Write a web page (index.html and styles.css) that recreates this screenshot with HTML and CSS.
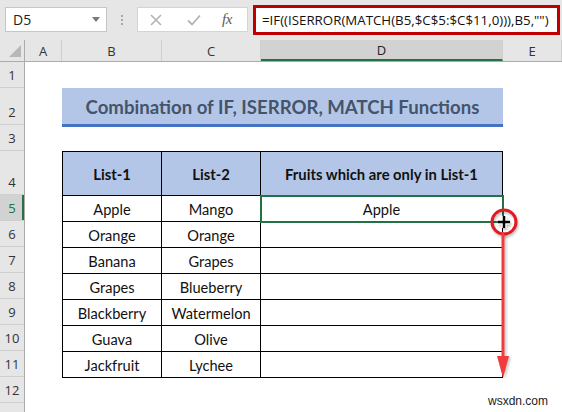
FILE: index.html
```html
<!DOCTYPE html>
<html lang="en">
<head>
<meta charset="utf-8">
<title>Combination of IF, ISERROR, MATCH Functions</title>
<link rel="stylesheet" href="styles.css">
</head>
<body>
<div class="app">
  <div class="toolbar">
    <div class="namebox">
      <span class="ref">D5</span>
      <svg class="caret" width="8" height="5" viewBox="0 0 8 5"><path d="M0 0H8L4 5Z" fill="#7a7a7a"/></svg>
    </div>
    <div class="grip"><i></i><i></i><i></i></div>
    <div class="fxbox">
      <svg class="tool" width="14" height="14" viewBox="0 0 14 14"><path d="M2 2L12 12M12 2L2 12" stroke="#b3b3b3" stroke-width="1.6" fill="none"/></svg>
      <svg class="tool" width="16" height="14" viewBox="0 0 16 14"><path d="M2 7.5L6 11.5L14 2.5" stroke="#b3b3b3" stroke-width="1.8" fill="none"/></svg>
      <span class="fx">fx</span>
    </div>
    <div class="formula">=IF((ISERROR(MATCH(B5,$C$5:$C$11,0))),B5,"")</div>
  </div>

  <div class="sheet">
    <div class="colheads">
      <div class="corner"><svg width="12" height="12" viewBox="0 0 12 12"><path d="M12 0V12H0Z" fill="#b8b8b8"/></svg></div>
      <div class="ch">A</div>
      <div class="ch">B</div>
      <div class="ch">C</div>
      <div class="ch active">D</div>
      <div class="ch">E</div>
    </div>

    <div class="body">
      <div class="rowheads">
        <div class="rh">1</div>
        <div class="rh h37">2</div>
        <div class="rh">3</div>
        <div class="rh h44">4</div>
        <div class="rh active">5</div>
        <div class="rh">6</div>
        <div class="rh">7</div>
        <div class="rh">8</div>
        <div class="rh">9</div>
        <div class="rh">10</div>
        <div class="rh">11</div>
        <div class="rh">12</div>
        <div class="rh"></div>
      </div>

      <div class="cells">
        <div class="gap"></div>
        <div class="title">Combination of IF, ISERROR, MATCH Functions</div>
        <div class="gap"></div>
        <div class="table">
          <div class="th">List-1</div>
          <div class="th">List-2</div>
          <div class="th">Fruits which are only in List-1</div>

          <div class="td">Apple</div><div class="td">Mango</div><div class="td selected">Apple</div>
          <div class="td">Orange</div><div class="td">Orange</div><div class="td"></div>
          <div class="td">Banana</div><div class="td">Grapes</div><div class="td"></div>
          <div class="td">Grapes</div><div class="td">Blueberry</div><div class="td"></div>
          <div class="td">Blackberry</div><div class="td">Watermelon</div><div class="td"></div>
          <div class="td">Guava</div><div class="td">Olive</div><div class="td"></div>
          <div class="td">Jackfruit</div><div class="td">Lychee</div><div class="td"></div>

          <!-- fill handle cursor and drag direction -->
          <svg class="handle" width="32" height="32" viewBox="0 0 32 32">
            <circle cx="16" cy="16" r="12" fill="none" stroke="#e31b23" stroke-width="3"/>
            <path d="M10 16H22M16 10V22" stroke="#fff" stroke-width="5"/>
            <path d="M10 16H22M16 10V22" stroke="#000" stroke-width="2.5"/>
          </svg>
          <svg class="drag" width="16" height="148" viewBox="0 0 16 148">
            <rect x="6.5" y="0" width="3" height="130" fill="#f03c3c"/>
            <path d="M2 124H14L8 146Z" fill="#f03c3c"/>
          </svg>
        </div>
      </div>
    </div>
  </div>

  <div class="watermark">wsxdn.com</div>
</div>
</body>
</html>
```

FILE: styles.css
```css
* { box-sizing: border-box; }

html, body {
  margin: 0;
  padding: 0;
  background: #ffffff;
}

.app {
  position: relative;
  width: 562px;
  height: 412px;
  overflow: hidden;
  font-family: "Open Sans", "Noto Sans", sans-serif;
}

/* name box + formula bar */
.toolbar {
  height: 40px;
  background: #e6e6e6;
  display: flex;
  align-items: flex-start;
  padding: 7px 2px 0 5px;
}

.namebox {
  width: 102px;
  height: 25px;
  background: #fff;
  border: 1px solid #c6c6c6;
  display: flex;
  align-items: center;
  justify-content: space-between;
  padding: 0 6px 0 7px;
  font-size: 14px;
  color: #222;
}

.namebox .ref { letter-spacing: 0.2px; }

.grip {
  width: 30px;
  height: 25px;
  display: flex;
  flex-direction: column;
  align-items: center;
  justify-content: center;
  gap: 2px;
}

.grip i {
  display: block;
  width: 2px;
  height: 2px;
  background: #a8a8a8;
}

.fxbox {
  width: 111px;
  height: 25px;
  background: #fff;
  border: 1px solid #d4d4d4;
  display: flex;
  align-items: center;
  padding: 0 0 0 11px;
  gap: 0;
}

.fxbox .tool { margin-right: 23px; }
.fxbox .tool + .tool { margin-right: 20px; }

.fx {
  font-family: "Liberation Serif", "DejaVu Serif", serif;
  font-style: italic;
  font-size: 15px;
  color: #5a5a5a;
  letter-spacing: -0.5px;
}

.formula {
  flex: 1;
  margin-left: 5px;
  margin-top: -2px;
  height: 30px;
  background: #fff;
  border: 3px solid #c00000;
  display: flex;
  align-items: center;
  padding-left: 6px;
  font-size: 13.3px;
  color: #111;
  white-space: nowrap;
  overflow: hidden;
}

/* worksheet */
.colheads {
  display: grid;
  grid-template-columns: 25px 37px 100px 99px 242px 1fr;
  height: 22px;
  background: #e6e6e6;
  border-bottom: 1px solid #ababab;
}

.corner {
  display: flex;
  align-items: flex-end;
  justify-content: flex-end;
  padding: 0 3px 4px 0;
  border-right: 1px solid #ababab;
}

.ch {
  display: flex;
  align-items: center;
  justify-content: center;
  font-size: 13px;
  color: #333;
  border-right: 1px solid #cfcfcf;
}

.ch.active {
  background: #d2d2d2;
  border-bottom: 2px solid #217346;
  color: #222;
}

.body {
  display: flex;
}

.rowheads {
  width: 25px;
  flex: none;
  background: #e6e6e6;
  border-right: 1px solid #ababab;
  display: flex;
  flex-direction: column;
}

.rh {
  height: 26px;
  border-bottom: 1px solid #cfcfcf;
  display: flex;
  align-items: flex-end;
  justify-content: center;
  padding-bottom: 3px;
  font-size: 13px;
  color: #333;
}

.rh.h37 { height: 37px; }
.rh.h44 { height: 44px; }

.rh.active {
  background: #d2d2d2;
  box-shadow: inset -2px 0 0 #217346;
  color: #217346;
}

.cells {
  padding-left: 37px;
  display: flex;
  flex-direction: column;
  width: 478px;
}

.gap { height: 26px; }

.title {
  height: 39px;
  margin-bottom: -2px;
  position: relative;
  background: #b4c6e7;
  border-bottom: 3px solid #4472c4;
  display: flex;
  align-items: center;
  justify-content: center;
  padding-top: 2px;
  font-family: "Lato", "Open Sans", sans-serif;
  font-weight: 700;
  font-size: 18.6px;
  color: #44546a;
  width: 441px;
}

.table {
  position: relative;
  display: grid;
  grid-template-columns: 99px 99px 242px;
  grid-template-rows: 44px repeat(7, 26px);
  width: 441px;
  border-top: 1px solid #000;
  border-left: 1px solid #000;
  font-family: "Lato", "Open Sans", sans-serif;
}

.th, .td {
  border-right: 1px solid #000;
  border-bottom: 1px solid #000;
  display: flex;
  align-items: center;
  justify-content: center;
  color: #111;
}

.th {
  background: #b4c6e7;
  font-weight: 700;
  font-size: 14.8px;
  padding-top: 0;
}

.td {
  font-size: 14.6px;
  padding-top: 1px;
}

.td.selected {
  outline: 2px solid #217346;
  outline-offset: -1px;
  position: relative;
}

.handle {
  position: absolute;
  left: 425px;
  top: 54px;
  filter: drop-shadow(1px 2px 1px rgba(0,0,0,0.25));
}

.drag {
  position: absolute;
  left: 432px;
  top: 80px;
  filter: drop-shadow(2px 1px 1px rgba(0,0,0,0.2));
}

.watermark {
  position: absolute;
  left: 488px;
  top: 394px;
  font-family: "Liberation Sans", Arial, sans-serif;
  font-size: 12px;
  color: #222;
}
```
